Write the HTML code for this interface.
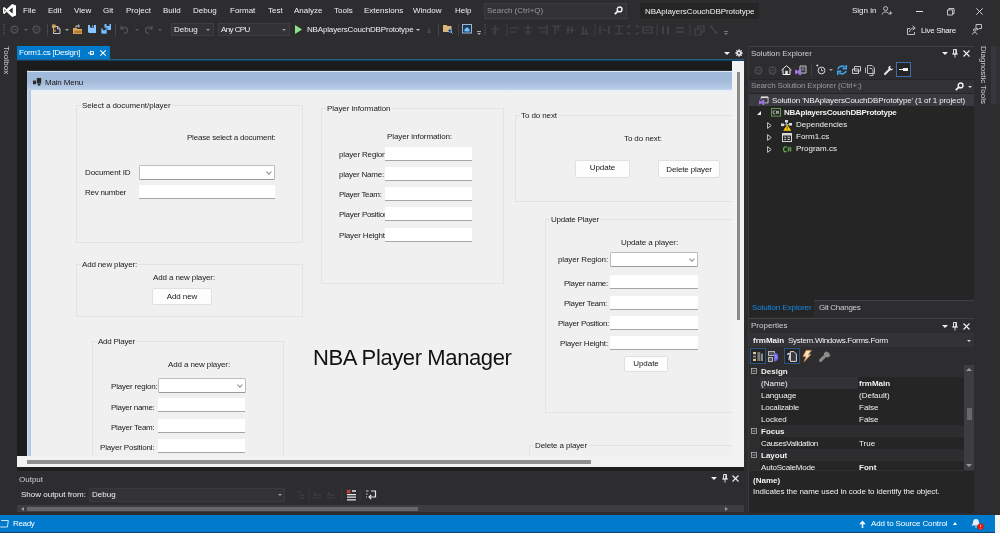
<!DOCTYPE html>
<html><head><meta charset="utf-8"><title>NBAplayersCouchDBPrototype - Microsoft Visual Studio</title>
<style>
*{box-sizing:border-box;margin:0;padding:0}
html,body{width:1000px;height:533px;overflow:hidden;background:#2d2d30}
body{position:relative;font-family:"Liberation Sans",sans-serif;font-size:8px;color:#f1f1f1;line-height:10px}
.a{position:absolute}
.t{position:absolute;white-space:nowrap;line-height:10px;height:10px}
.b{font-weight:700}
.g{color:#999}
svg{position:absolute;overflow:visible}
.t,.grp>span,.btn{will-change:transform}
.f .t{color:#1a1a1a}
.grp{position:absolute;border:1px solid #e3e3e3}
.grp>span{position:absolute;top:-5px;left:4px;background:#f0f0f0;padding:0 1px;white-space:nowrap;color:#1a1a1a;line-height:10px;height:10px}
.tb{position:absolute;background:#fff;border-bottom:1px solid #a6a6a6}
.cb{position:absolute;background:#fff;border:1px solid #bdbdbd;border-bottom-color:#9a9a9a;border-radius:1.5px}
.cb:after{content:"";position:absolute;right:3.5px;top:3.5px;width:2.8px;height:2.8px;border-right:1px solid #888;border-bottom:1px solid #888;transform:rotate(45deg)}
.btn{position:absolute;background:#fdfdfd;border:1px solid #e0e0e0;border-radius:2px;text-align:center;color:#1a1a1a;white-space:nowrap}
</style></head><body>
<div id="top" class="a" style="left:0;top:0;width:1000px;height:46px">
<!-- vs logo -->
<svg style="left:3px;top:4px" width="13" height="13" viewBox="0 0 13 13"><path d="M9.2 0 L13 1.6 V11.4 L9.2 13 L3.5 7.8 L1.4 10 L0 9.3 V3.7 L1.4 3 L3.5 5.2 Z M9.7 3.6 L5.9 6.5 L9.7 9.4 Z M1.4 5.1 V7.9 L2.8 6.5 Z" fill="#fff" fill-rule="evenodd"/></svg>
<span class="t" style="left:23px;top:6px">File</span>
<span class="t" style="left:48px;top:6px">Edit</span>
<span class="t" style="left:74px;top:6px">View</span>
<span class="t" style="left:103px;top:6px">Git</span>
<span class="t" style="left:126px;top:6px">Project</span>
<span class="t" style="left:163px;top:6px">Build</span>
<span class="t" style="left:193px;top:6px">Debug</span>
<span class="t" style="left:230px;top:6px">Format</span>
<span class="t" style="left:268px;top:6px">Test</span>
<span class="t" style="left:294px;top:6px">Analyze</span>
<span class="t" style="left:334px;top:6px">Tools</span>
<span class="t" style="left:364px;top:6px">Extensions</span>
<span class="t" style="left:413px;top:6px">Window</span>
<span class="t" style="left:455px;top:6px">Help</span>
<div class="a" style="left:484px;top:3px;width:143px;height:16px;background:#333337;border:1px solid #3c3c41"></div>
<span class="t g" style="left:487px;top:6px">Search (Ctrl+Q)</span>
<svg style="left:614px;top:6px" width="9" height="9" viewBox="0 0 9 9"><circle cx="5.6" cy="3.4" r="2.4" fill="none" stroke="#f1f1f1" stroke-width="1.4"/><path d="M3.8 5.2 L0.8 8.2" stroke="#f1f1f1" stroke-width="1.8"/></svg>
<div class="a" style="left:640px;top:3px;width:119px;height:16px;background:#252526"></div>
<span class="t" style="left:645px;top:7px;letter-spacing:-0.047px;">NBAplayersCouchDBPrototype</span>
<span class="t" style="left:852px;top:6px">Sign in</span>
<svg style="left:882px;top:6px" width="11" height="10" viewBox="0 0 11 10"><circle cx="3.6" cy="2.6" r="2" fill="none" stroke="#d0d0d0" stroke-width=".9"/><path d="M0.3 8.5 C0.3 5.2 6.9 5.2 6.9 8.5" fill="none" stroke="#d0d0d0" stroke-width=".9"/><path d="M8.6 5.4 V8.6 M7 7 H10.2" stroke="#d0d0d0" stroke-width=".9"/></svg>
<div class="a" style="left:916px;top:11px;width:7px;height:1px;background:#e0e0e0"></div>
<svg style="left:946.5px;top:7.5px" width="7.5" height="7.5" viewBox="0 0 8 8"><path d="M.5 2 H6 V7.5 H.5 Z M2 2 V.5 H7.5 V6 H6" fill="none" stroke="#e0e0e0" stroke-width=".9"/></svg>
<svg style="left:976px;top:8px" width="7" height="7" viewBox="0 0 7 7"><path d="M.3 .3 L6.7 6.7 M6.7 .3 L.3 6.7" stroke="#e0e0e0" stroke-width=".9"/></svg>
<!-- toolbar -->
<div class="a" style="left:3px;top:24px;width:2px;height:11px;background:repeating-linear-gradient(#46464a 0 1px,transparent 1px 2px)"></div>
<svg style="left:10px;top:25px" width="9" height="9" viewBox="0 0 9 9"><circle cx="4.5" cy="4.5" r="3.3" fill="none" stroke="#4d4d51" stroke-width="1.7"/><path d="M3.4 4.5 H6" stroke="#4d4d51" stroke-width="1.2"/></svg>
<div class="a" style="left:24px;top:29px;border:2px solid transparent;border-top:2px solid #666;width:0;height:0"></div>
<svg style="left:32px;top:25px" width="9" height="9" viewBox="0 0 9 9"><circle cx="4.5" cy="4.5" r="3.3" fill="none" stroke="#4d4d51" stroke-width="1.7"/><path d="M3 4.5 H5.6" stroke="#4d4d51" stroke-width="1.2"/></svg>
<div class="a" style="left:47px;top:24px;width:1px;height:12px;background:#46464a"></div>
<svg style="left:52px;top:24px" width="9" height="10" viewBox="0 0 9 10"><path d="M1.5 2.5 H5.8 L8 4.7 V9.5 H1.5 Z" fill="#2d2d30" stroke="#d8d8d8" stroke-width=".9"/><path d="M0 .5 H3.6 V3.8 H0 Z" fill="#d9a55b"/><path d="M1 5.5 H4 V8 H1 Z" fill="#c09050" opacity=".7"/><path d="M5.5 2.5 V5 H8" fill="none" stroke="#d8d8d8" stroke-width=".8"/></svg>
<div class="a" style="left:65px;top:29px;border:2px solid transparent;border-top:2px solid #a8a8a8;width:0;height:0"></div>
<svg style="left:73px;top:24px" width="10" height="10" viewBox="0 0 10 10"><path d="M0 4 H3.5 L4.5 5 H9 V10 H0 Z" fill="#e0a95a"/><path d="M1.5 6.5 H9.6 L8 9.2 H.8 Z" fill="#8a5a1a" opacity=".55"/><path d="M3 3.6 V2 H6 M5 .6 L6.6 2 L5 3.4" fill="none" stroke="#d8d8d8" stroke-width=".9"/></svg>
<svg style="left:88px;top:25px" width="8" height="8" viewBox="0 0 8 8"><path d="M0 0 H8 V8 H1 L0 7 Z" fill="#86c5ff"/><rect x="2" y="0" width="4" height="2.6" fill="#2d2d30"/><rect x="4.2" y=".4" width="1" height="1.8" fill="#86c5ff"/></svg>
<svg style="left:101px;top:24px" width="10" height="10" viewBox="0 0 10 10"><path d="M3.5 0 H10 V6 H4.5 L3.5 5 Z" fill="#75beff"/><rect x="5.5" y="0" width="3" height="2" fill="#2d2d30"/><path d="M0 4 H6 V10 H1 L0 9 Z" fill="#75beff" stroke="#2d2d30" stroke-width=".6"/><rect x="1.7" y="4" width="3" height="2.2" fill="#2d2d30"/></svg>
<div class="a" style="left:115px;top:24px;width:1px;height:12px;background:#46464a"></div>
<svg style="left:120px;top:25px" width="9" height="9" viewBox="0 0 9 9"><path d="M1 0.5 V4 H4.5 M1.3 3.8 C3 1 7.5 1.5 7.5 5 C7.5 7 6 8.3 4 8.5" fill="none" stroke="#55555a" stroke-width="1.2"/></svg>
<div class="a" style="left:135px;top:29px;border:2px solid transparent;border-top:2px solid #5a5a5e;width:0;height:0"></div>
<svg style="left:144px;top:25px" width="9" height="9" viewBox="0 0 9 9"><path d="M8 0.5 V4 H4.5 M7.7 3.8 C6 1 1.5 1.5 1.5 5 C1.5 7 3 8.3 5 8.5" fill="none" stroke="#55555a" stroke-width="1.2"/></svg>
<div class="a" style="left:158px;top:29px;border:2px solid transparent;border-top:2px solid #5a5a5e;width:0;height:0"></div>
<div class="a" style="left:171px;top:23px;width:43px;height:13px;background:#333337;border:1px solid #3d3d42"></div>
<span class="t" style="left:174px;top:25px">Debug</span>
<div class="a" style="left:206px;top:29px;border:2px solid transparent;border-top:2px solid #999;width:0;height:0"></div>
<div class="a" style="left:218px;top:23px;width:72px;height:13px;background:#333337;border:1px solid #3d3d42"></div>
<span class="t" style="left:221px;top:25px;letter-spacing:-0.587px;">Any CPU</span>
<div class="a" style="left:282px;top:29px;border:2px solid transparent;border-top:2px solid #999;width:0;height:0"></div>
<svg style="left:295px;top:25px" width="7" height="9" viewBox="0 0 7 9"><path d="M0 0 L7 4.5 L0 9 Z" fill="#8ae28a"/></svg>
<span class="t" style="left:307px;top:25px;letter-spacing:-0.162px;">NBAplayersCouchDBPrototype</span>
<div class="a" style="left:416px;top:29px;border:2px solid transparent;border-top:2px solid #c8c8c8;width:0;height:0"></div>
<svg style="left:426px;top:26px" width="6" height="8" viewBox="0 0 6 8"><path d="M1 7 L3 1 L5 7 Z" fill="#46464a"/></svg>
<div class="a" style="left:438px;top:24px;width:1px;height:12px;background:#46464a"></div>
<svg style="left:443px;top:24px" width="10" height="10" viewBox="0 0 10 10"><path d="M0 1 H3.5 L4.5 2 H8.5 V8 H0 Z" fill="#dcb67a"/><circle cx="6.8" cy="6.6" r="1.6" fill="#2d2d30" stroke="#75beff" stroke-width=".9"/><path d="M8 8 L9.5 9.5" stroke="#75beff" stroke-width="1"/></svg>
<div class="a" style="left:458px;top:24px;width:1px;height:12px;background:#3f3f46"></div>
<svg style="left:462px;top:24px" width="10" height="10" viewBox="0 0 10 10"><rect x=".5" y=".5" width="9" height="8.5" fill="#1e3a5a" stroke="#9ab7d8" stroke-width="1"/><path d="M2.5 5.5 L5 3 L7.5 5.5 V7.5 H2.5 Z" fill="#75beff"/></svg>
<div class="a" style="left:477px;top:31px;width:4px;height:1px;background:#aaa"></div>
<div class="a" style="left:477px;top:33px;border:2px solid transparent;border-top:2px solid #aaa;width:0;height:0"></div>
<div class="a" style="left:484px;top:24px;width:2px;height:11px;background:repeating-linear-gradient(#46464a 0 1px,transparent 1px 2px)"></div>
<svg style="left:490px;top:24px" width="240" height="12" viewBox="0 0 240 12" fill="none" stroke="#47474b" stroke-width="1.2">
<path d="M5 1 V11 M1 5 H9 M2 8 H7"/>
<path d="M17 0 V12" stroke-width="1" stroke="#3f3f46"/>
<path d="M20 4 H29 M20 8 H26"/>
<path d="M34 4 H42 M35 8 H41 M38 1 V11"/>
<path d="M48 4 H56 M51 8 H56 M57 1 V11"/>
<path d="M62 2 H71 M65 2 V10 M68 2 V7"/>
<path d="M76 6 H84 M78 2 V10 M82 3 V9"/>
<path d="M90 10 H99 M93 10 V2 M96 10 V5"/>
<path d="M105 0 V12" stroke-width="1" stroke="#3f3f46"/>
<path d="M110 2 V10 M119 2 V10 M112 6 H117"/>
<path d="M125 2 H133 M125 10 H133 M129 2 V10"/>
<path d="M138 2 H141 M145 2 H148 M138 10 H141 M145 10 H148 M138 2 V4 M148 2 V4 M138 8 V10 M148 8 V10"/>
<path d="M153 3 H162 V9 H153 Z M155 6 H160"/>
<path d="M167 0 V12" stroke-width="1" stroke="#3f3f46"/>
<path d="M173 2 V10 M178 2 V10" stroke-width="1.6"/>
<path d="M186 4 H194 M186 8 H194" stroke-width="1.6"/>
<path d="M200 0 V12" stroke-width="1" stroke="#3f3f46"/>
<path d="M205 5 H211 V11 H205 Z M208 5 V2 H214 V8 H211"/>
<path d="M220 2 L227 9 M220 2 H223 M227 9 H224"/>
</svg>
<div class="a" style="left:724px;top:31px;width:4px;height:1px;background:#777"></div>
<div class="a" style="left:724px;top:33px;border:2px solid transparent;border-top:2px solid #777;width:0;height:0"></div>
<!-- live share -->
<svg style="left:907px;top:25px" width="10" height="10" viewBox="0 0 10 10" fill="none" stroke="#d0d0d0" stroke-width=".9"><path d="M3 3.5 H.5 V9.5 H7.5 V7"/><path d="M2.5 7 C3 4 5 3 7 3 M5.5 .8 L8.2 3 L5.5 5.2"/></svg>
<span class="t" style="left:921px;top:26px;letter-spacing:-0.345px;">Live Share</span>
<svg style="left:972px;top:24px" width="10" height="11" viewBox="0 0 10 11" fill="none" stroke="#d0d0d0" stroke-width=".9"><path d="M4 .5 H9.5 V4.5 H7 L5.5 6 V4.5 H4 Z"/><circle cx="2.8" cy="6" r="1.3"/><path d="M.5 10.5 C.5 7.8 5 7.8 5 10.5"/></svg>
<!-- TAB ROW -->
<span class="t" style="left:-9px;top:56px;transform:rotate(90deg);transform-origin:center;width:30px;color:#d0d0d0;letter-spacing:0.132px;">Toolbox</span>
<div class="a" style="left:17px;top:46px;width:93px;height:14px;background:#007acc"></div>
<span class="t" style="left:19px;top:48px;color:#fff;letter-spacing:-0.230px;">Form1.cs [Design]</span>
<svg style="left:88px;top:50px" width="6" height="6" viewBox="0 0 6 6"><path d="M0 3 H2.5 M2.5 .8 V5.2 M2.5 1.5 H5.5 V4 H2.5 M2.5 4.5 H5.5" fill="none" stroke="#fff" stroke-width=".9"/></svg>
<svg style="left:100px;top:50px" width="6" height="6" viewBox="0 0 6 6"><path d="M.3 .3 L5.7 5.7 M5.7 .3 L.3 5.7" stroke="#fff" stroke-width="1.1"/></svg>
<div class="a" style="left:17px;top:59px;width:727px;height:2px;background:linear-gradient(#2a5f8a 50%,#103f63 50%)"></div>
<div class="a" style="left:724px;top:52px;border:3px solid transparent;border-top:3px solid #f1f1f1;width:0;height:0"></div>
<svg style="left:735px;top:49px" width="8" height="8" viewBox="0 0 8 8"><circle cx="4" cy="4" r="2.1" fill="none" stroke="#f1f1f1" stroke-width="1.5"/><path d="M4 0 V8 M0 4 H8 M1.2 1.2 L6.8 6.8 M6.8 1.2 L1.2 6.8" stroke="#f1f1f1" stroke-width=".9"/><circle cx="4" cy="4" r="1" fill="#2d2d30"/></svg>
<div class="a" style="left:991px;top:46px;width:9px;height:58px;background:linear-gradient(90deg,#37373b 55%,#323236 55%)"></div>
<span class="t" style="left:953px;top:71px;transform:rotate(90deg);transform-origin:center;width:60px;color:#d0d0d0;letter-spacing:-0.007px;">Diagnostic Tools</span>
</div>
<div id="designer" class="a" style="left:17px;top:61px;width:727px;height:406px;overflow:hidden">
<div class="a" style="left:0;top:0;width:727px;height:406px;background:#1c1c1c"></div><!--id-bg-->
<!-- coordinates inside designer: origin (17,61) -->
<div class="a" style="left:715px;top:0;width:12px;height:406px;background:#f2f2f2"></div>
<div class="a" style="left:0;top:395px;width:727px;height:11px;background:#f2f2f2"></div>
<div class="a" style="left:720px;top:11px;width:3px;height:248px;background:#8a8a8a"></div>
<div class="a" style="left:10px;top:399px;width:564px;height:4px;background:#8f8f8f"></div>
<!-- form -->
<div class="a f" style="left:10px;top:9px;width:705px;height:386px;background:#f0f0f0;overflow:hidden;border-radius:2px 0 0 0">
 <div class="a" style="left:0;top:0;width:705px;height:22px;background:linear-gradient(#2a2f36 0,#2a2f36 .6px,#dfe9f3 1px,#dfe9f3 1.8px,#9fbadc 2.4px,#a2b9d9 10px,#a9c0df 14px,#b9cee8 19.4px,#e6eef7 20px,#e8eff7 21.2px,#f0f0f0 22px)"></div>
 <div class="a" style="left:0;top:20px;width:4px;height:400px;z-index:1;background:linear-gradient(90deg,#d5e3f3,#b4c9e6 50%)"></div>
 <svg style="left:6px;top:8px" width="9" height="8" viewBox="0 0 9 8"><rect x="0" y="2.6" width="3" height="3.6" fill="#2a2a2a"/><rect x="3.8" y="0" width="4.4" height="5.6" fill="#2a2a2a"/><rect x="4.8" y="6" width="2.6" height="1.6" fill="#2a2a2a"/></svg>
 <span class="t" style="left:18px;top:8px;letter-spacing:-0.175px;">Main Menu</span>
<div class="grp" style="left:49px;top:35px;width:227px;height:138px"><span style="letter-spacing:-0.074px;">Select a document/player</span></div>
<div class="grp" style="left:294px;top:38px;width:183px;height:176px"><span style="letter-spacing:-0.055px;">Player information</span></div>
<div class="grp" style="left:488px;top:45px;width:246px;height:87px"><span style="letter-spacing:-0.092px;">To do next</span></div>
<div class="grp" style="left:518px;top:149px;width:216px;height:194px"><span style="letter-spacing:-0.208px;">Update Player</span></div>
<div class="grp" style="left:49px;top:194px;width:227px;height:53px"><span style="letter-spacing:-0.158px;">Add new player:</span></div>
<div class="grp" style="left:65px;top:271px;width:192px;height:130px"><span style="letter-spacing:-0.214px;">Add Player</span></div>
<div class="grp" style="left:502px;top:375px;width:232px;height:26px"><span style="letter-spacing:-0.121px;">Delete a player</span></div>
<span class="t" style="left:160px;top:63px;letter-spacing:-0.214px;">Please select a document:</span>
<span class="t" style="left:58px;top:98px;letter-spacing:-0.108px;">Document ID</span>
<div class="cb" style="left:112px;top:95px;width:136px;height:15px"></div>
<span class="t" style="left:58px;top:118px;letter-spacing:-0.258px;">Rev number</span>
<div class="tb" style="left:112px;top:115px;width:136px;height:14px"></div>
<span class="t" style="left:360px;top:62px;letter-spacing:-0.090px;">Player information:</span>
<span class="t" style="left:312px;top:80px;letter-spacing:-0.150px;width:46px;overflow:hidden">player Region:</span>
<div class="tb" style="left:358px;top:77px;width:87px;height:14px"></div>
<span class="t" style="left:312px;top:100px;letter-spacing:-0.215px;width:46px;overflow:hidden">player Name:</span>
<div class="tb" style="left:358px;top:97px;width:87px;height:14px"></div>
<span class="t" style="left:312px;top:120px;letter-spacing:-0.329px;width:46px;overflow:hidden">Player Team:</span>
<div class="tb" style="left:358px;top:117px;width:87px;height:14px"></div>
<span class="t" style="left:312px;top:140px;letter-spacing:-0.287px;width:46px;overflow:hidden">Player Position:</span>
<div class="tb" style="left:358px;top:137px;width:87px;height:14px"></div>
<span class="t" style="left:312px;top:161px;letter-spacing:-0.161px;width:46px;overflow:hidden">Player Height:</span>
<div class="tb" style="left:358px;top:158px;width:87px;height:14px"></div>
<span class="t" style="left:597px;top:64px;letter-spacing:-0.104px;">To do next:</span>
<div class="btn" style="left:548px;top:90px;width:55px;height:18px;line-height:16px"><span style="position:relative;top:-1px;letter-spacing:-0.049px;">Update</span></div>
<div class="btn" style="left:631px;top:90px;width:62px;height:18px;line-height:16px"><span style="position:relative;top:1px;letter-spacing:-0.126px;">Delete player</span></div>
<span class="t" style="left:594px;top:168px;letter-spacing:-0.106px;">Update a player:</span>
<span class="t" style="left:531px;top:185px;letter-spacing:-0.114px;">player Region:</span>
<div class="cb" style="left:583px;top:182px;width:88px;height:15px"></div>
<span class="t" style="left:537px;top:209px;letter-spacing:-0.262px;">Player name:</span>
<div class="tb" style="left:583px;top:205px;width:88px;height:14px"></div>
<span class="t" style="left:537px;top:229px;letter-spacing:-0.296px;">Player Team:</span>
<div class="tb" style="left:583px;top:226px;width:88px;height:14px"></div>
<span class="t" style="left:531px;top:249px;letter-spacing:-0.287px;">Player Position:</span>
<div class="tb" style="left:583px;top:246px;width:88px;height:14px"></div>
<span class="t" style="left:533px;top:269px;letter-spacing:-0.161px;">Player Height:</span>
<div class="tb" style="left:583px;top:266px;width:88px;height:14px"></div>
<div class="btn" style="left:597px;top:286px;width:44px;height:16px;line-height:14px"><span style="position:relative;top:0px;letter-spacing:-0.049px;">Update</span></div>
<span class="t" style="left:126px;top:203px;letter-spacing:-0.120px;">Add a new player:</span>
<div class="btn" style="left:125px;top:218px;width:60px;height:17px;line-height:15px"><span style="position:relative;top:0px;letter-spacing:-0.092px;">Add new</span></div>
<span class="t" style="left:141px;top:290px;letter-spacing:-0.120px;">Add a new player:</span>
<span class="t" style="left:84px;top:312px;letter-spacing:-0.204px;">Player region:</span>
<div class="cb" style="left:131px;top:308px;width:88px;height:15px"></div>
<span class="t" style="left:84px;top:333px;letter-spacing:-0.303px;">Player name:</span>
<div class="tb" style="left:131px;top:328px;width:87px;height:14px"></div>
<span class="t" style="left:84px;top:353px;letter-spacing:-0.254px;">Player Team:</span>
<div class="tb" style="left:131px;top:349px;width:87px;height:14px"></div>
<span class="t" style="left:73px;top:373px;letter-spacing:-0.168px;">Player Positionl:</span>
<div class="tb" style="left:131px;top:369px;width:87px;height:14px"></div>
<span class="t" style="left:286px;top:275px;font-size:22px;line-height:26px;height:26px;color:#111;letter-spacing:-0.385px;">NBA Player Manager</span>
</div>
</div>
<div id="output" class="a" style="left:17px;top:467px;width:727px;height:48px">
<!-- origin (17,467) size 727x48 -->
<div class="a" style="left:0;top:0;width:727px;height:4px;background:#1e1e1e"></div>
<div class="a" style="left:0;top:4px;width:727px;height:44px;background:#2d2d30"></div>
<span class="t" style="left:2px;top:8px;color:#d0d0d0">Output</span>
<div class="a" style="left:694px;top:10px;border:3px solid transparent;border-top:3px solid #f1f1f1;width:0;height:0"></div>
<svg style="left:705px;top:7px" width="6" height="9" viewBox="0 0 6 9"><path d="M1.5 .5 H4.5 V5 H1.5 Z M0 5 H6 M3 5 V8.5 M3.8 .5 V5" fill="none" stroke="#f1f1f1" stroke-width=".9"/></svg>
<svg style="left:715px;top:8px" width="7" height="7" viewBox="0 0 7 7"><path d="M.5 .5 L6.5 6.5 M6.5 .5 L.5 6.5" stroke="#f1f1f1" stroke-width="1.1"/></svg>
<span class="t" style="left:4px;top:23px">Show output from:</span>
<div class="a" style="left:72px;top:21px;width:196px;height:14px;background:#333337;border:1px solid #3a3a3e"></div>
<span class="t" style="left:75px;top:23px">Debug</span>
<div class="a" style="left:261px;top:27px;border:2px solid transparent;border-top:2px solid #999;width:0;height:0"></div>
<svg style="left:279px;top:22px" width="100" height="12" viewBox="0 0 100 12" fill="none">
<path d="M1 3 H5 M3 6 H8 M3 9 H8" stroke="#424246" stroke-width="1.2"/>
<path d="M13 0 V12" stroke="#3a3a3f" stroke-width="1"/>
<path d="M19 3 V5 M17 6 H25 M17 9 H25" stroke="#424246" stroke-width="1.2"/>
<path d="M33 3 V5 M31 6 H39 M31 9 H39" stroke="#424246" stroke-width="1.2"/>
<path d="M46 0 V12" stroke="#3a3a3f" stroke-width="1"/>
<path d="M51 .8 L54.4 4.2 M54.4 .8 L51 4.2" stroke="#e8493a" stroke-width="1.2"/>
<path d="M56 2 H60 M51 5.6 H60 M51 8.2 H60 M51 10.8 H60" stroke="#e8e8e8" stroke-width="1.3"/>
<path d="M64 0 V12" stroke="#3a3a3f" stroke-width="1"/>
<path d="M75 2 H79.5 V8 H73 M75.2 5.8 L73 8 L75.2 10.2" stroke="#e8e8e8" stroke-width="1.2"/>
<path d="M70 2 H72.5 M70 5 H71.5 M70 8 H71" stroke="#e8e8e8" stroke-width=".9"/>
</svg>
<div class="a" style="left:0;top:38px;width:727px;height:7px;background:#3e3e42"></div>
<div class="a" style="left:4px;top:39.5px;border:2.5px solid transparent;border-right:3px solid #999;border-left:0;width:0;height:0"></div>
<div class="a" style="left:708px;top:39.5px;border:2.5px solid transparent;border-left:3px solid #999;border-right:0;width:0;height:0"></div>
<div class="a" style="left:10px;top:40px;width:391px;height:4px;background:linear-gradient(#686868 85%,#55555a)"></div>
</div>
<div id="right" class="a" style="left:748px;top:46px;width:226px;height:467px">
<!-- origin (748,46); size 225x467 -->
<div class="a" style="left:0;top:0;width:226px;height:467px;background:#252526"></div><!--id-bg-->
<div class="a" style="left:0;top:0;width:226px;height:33px;background:#2d2d30"></div>
<div class="a" style="left:0;top:0;width:226px;height:1px;background:#3f3f46"></div>
<span class="t" style="left:3px;top:3px;color:#d0d0d0">Solution Explorer</span>
<div class="a" style="left:194px;top:6px;border:3px solid transparent;border-top:3px solid #f1f1f1;width:0;height:0"></div>
<svg style="left:204px;top:3px" width="6" height="9" viewBox="0 0 6 9"><path d="M1.5 .5 H4.5 V5 H1.5 Z M0 5 H6 M3 5 V8.5 M3.8 .5 V5" fill="none" stroke="#f1f1f1" stroke-width=".9"/></svg>
<svg style="left:215px;top:4px" width="7" height="7" viewBox="0 0 7 7"><path d="M.5 .5 L6.5 6.5 M6.5 .5 L.5 6.5" stroke="#f1f1f1" stroke-width="1.1"/></svg>
<!-- toolbar icons y center 24 -->
<svg style="left:6px;top:20px" width="9" height="9" viewBox="0 0 9 9"><circle cx="4.5" cy="4.5" r="3.3" fill="none" stroke="#48484c" stroke-width="1.7"/><path d="M3 4.5 H6.5" stroke="#4a4a4e" stroke-width="1.2"/></svg>
<svg style="left:20px;top:20px" width="9" height="9" viewBox="0 0 9 9"><circle cx="4.5" cy="4.5" r="3.3" fill="none" stroke="#48484c" stroke-width="1.7"/><path d="M2.5 4.5 H6" stroke="#4a4a4e" stroke-width="1.2"/></svg>
<svg style="left:33px;top:19px" width="11" height="10" viewBox="0 0 11 10"><path d="M.5 5.2 L5.5 .7 L10.5 5.2 M2 4.5 V9.5 H9 V4.5" fill="none" stroke="#f1f1f1" stroke-width="1"/><rect x="4.3" y="5.8" width="2.4" height="3.7" fill="#f1f1f1"/></svg>
<svg style="left:47px;top:19px" width="12" height="11" viewBox="0 0 12 11"><path d="M5 1 H11 V8 H5 Z" fill="none" stroke="#c8c8c8" stroke-width="1"/><path d="M6.5 3 H9.5 M6.5 5 H9.5" stroke="#c8c8c8" stroke-width=".8"/><path d="M0 5.2 L1 4.6 L2.6 6 L5 3.6 L6.3 4.2 V9.8 L5 10.4 L2.6 8 L1 9.4 L0 8.8 Z" fill="#a074e0"/></svg>
<div class="a" style="left:63px;top:18px;width:1px;height:12px;background:#3f3f46"></div>
<svg style="left:68px;top:18px" width="10" height="11" viewBox="0 0 10 11"><circle cx="5.5" cy="6.5" r="3.4" fill="none" stroke="#d8d8d8" stroke-width="1"/><path d="M5.5 4.5 V6.7 H7.2" fill="none" stroke="#d8d8d8" stroke-width=".9"/><circle cx="1.3" cy="1.5" r="1" fill="#d8d8d8"/></svg>
<div class="a" style="left:81px;top:23px;border:2px solid transparent;border-top:2px solid #a0a0a0;width:0;height:0"></div>
<svg style="left:89px;top:19px" width="10" height="10" viewBox="0 0 10 10"><path d="M1 4.2 C1.4 1.6 5 .2 7.6 2.2 M9.2 0 V3.6 H5.6 M9 5.8 C8.6 8.4 5 9.8 2.4 7.8 M.8 10 V6.4 H4.4" fill="none" stroke="#3f9fe8" stroke-width="1.7"/></svg>
<svg style="left:104px;top:20px" width="9" height="9" viewBox="0 0 9 9"><path d="M2.5 .5 H8.5 V5 H2.5 Z M.5 3 H6.5 V7.5 H.5 Z" fill="#2d2d30" stroke="#c8c8c8" stroke-width="1"/></svg>
<svg style="left:117px;top:19px" width="10" height="11" viewBox="0 0 10 11"><path d="M.5 2.5 V8 M2.5 .5 H7 L9.5 3 V8.5 H2.5 Z M4.5 3.5 H7 L8 4.8 V10.5 H4.5" fill="none" stroke="#c8c8c8" stroke-width=".9"/></svg>
<svg style="left:136px;top:19px" width="10" height="10" viewBox="0 0 10 10"><path d="M1 9 L5.2 4.8" stroke="#e8e8e8" stroke-width="2" stroke-linecap="round"/><path d="M6.5 .7 C4.5 .7 3.8 2.8 4.8 4.4 C6 5.8 8.6 5.6 9.2 3.4 L7.4 4 L6.2 2.8 Z" fill="#e8e8e8"/></svg>
<div class="a" style="left:148px;top:16px;width:15px;height:15px;border:1px solid #3e6fa8;background:#252526"></div>
<div class="a" style="left:151px;top:23px;width:4px;height:1px;background:#f1f1f1"></div>
<div class="a" style="left:155px;top:22px;width:5px;height:3px;background:#f1f1f1"></div>
<!-- search row -->
<div class="a" style="left:0;top:34px;width:226px;height:13px;background:#333337"></div>
<span class="t g" style="left:3px;top:35px;letter-spacing:-0.148px;">Search Solution Explorer (Ctrl+;)</span>
<svg style="left:207px;top:36px" width="9" height="9" viewBox="0 0 9 9"><circle cx="5.6" cy="3.4" r="2.4" fill="none" stroke="#f1f1f1" stroke-width="1.4"/><path d="M3.8 5.2 L0.8 8.2" stroke="#f1f1f1" stroke-width="1.8"/></svg>
<div class="a" style="left:220px;top:40px;border:2px solid transparent;border-top:2px solid #d8d8d8;width:0;height:0"></div>
<!-- tree -->
<div class="a" style="left:0;top:48px;width:226px;height:12px;background:#3a3a40"></div>
<svg style="left:10.5px;top:50px" width="9.5" height="9.5" viewBox="0 0 11 11"><path d="M2.5 1 H10.5 V8 H6.5 M2.5 1 V4" fill="none" stroke="#d8d8d8" stroke-width="1"/><path d="M2.5 1.7 H10.5" stroke="#d8d8d8" stroke-width="1.6"/><path d="M0 5.6 L1 5 L2.6 6.4 L5 4 L6.3 4.6 V10.2 L5 10.8 L2.6 8.4 L1 9.8 L0 9.2 Z" fill="#a074e0"/></svg>
<span class="t" style="left:24px;top:50px;letter-spacing:-0.106px;">Solution 'NBAplayersCouchDBPrototype' (1 of 1 project)</span>
<div class="a" style="left:9px;top:65px;border:2.5px solid transparent;border-right:2.5px solid #f1f1f1;border-bottom:2.5px solid #f1f1f1;width:0;height:0"></div>
<svg style="left:22.5px;top:62px" width="10" height="9" viewBox="0 0 11 10"><rect x=".5" y=".5" width="10" height="8.5" fill="none" stroke="#6aa84f" stroke-width="1"/><path d="M4.6 3.2 C3 2.6 2.2 3.6 2.2 4.8 C2.2 6 3 7 4.6 6.4" fill="none" stroke="#e8e8e8" stroke-width=".9"/><path d="M6.2 3 V6.6 M8 3 V6.6 M5.4 4.1 H8.8 M5.4 5.5 H8.8" stroke="#e8e8e8" stroke-width=".6"/></svg>
<span class="t b" style="left:36px;top:62px;letter-spacing:-0.255px;">NBAplayersCouchDBPrototype</span>
<svg style="left:19px;top:76px" width="5" height="7" viewBox="0 0 5 7"><path d="M.6 .6 L4.2 3.5 L.6 6.4 Z" fill="none" stroke="#d8d8d8" stroke-width=".9"/></svg>
<svg style="left:33px;top:74px" width="11" height="11" viewBox="0 0 11 11"><rect x="4" y="0" width="3" height="2.6" fill="#d8d8d8"/><rect x="0" y="3.5" width="3" height="2.6" fill="#d8d8d8"/><rect x="8" y="3" width="3" height="2.6" fill="#d8d8d8"/><path d="M3 4.8 H5.5 V2.6 M5.5 4.4 H8" fill="none" stroke="#d8d8d8" stroke-width=".7"/><path d="M6.2 4.6 L10.2 10.8 H2.2 Z" fill="#ffcc00"/><path d="M6.2 6.6 V8.6 M6.2 9.3 V10" stroke="#222" stroke-width=".8"/></svg>
<span class="t" style="left:48px;top:74px">Dependencies</span>
<svg style="left:19px;top:88px" width="5" height="7" viewBox="0 0 5 7"><path d="M.6 .6 L4.2 3.5 L.6 6.4 Z" fill="none" stroke="#d8d8d8" stroke-width=".9"/></svg>
<svg style="left:34px;top:87px" width="10" height="9" viewBox="0 0 10 9"><rect x=".5" y=".5" width="9" height="8" fill="none" stroke="#d8d8d8" stroke-width="1"/><path d="M.5 1.6 H9.5" stroke="#d8d8d8" stroke-width="1.8"/><path d="M2.2 4.2 H4.2 M5.4 4.2 H8 M2.2 6.4 H4.2 M5.4 6.4 H8" stroke="#d8d8d8" stroke-width="1"/></svg>
<span class="t" style="left:48px;top:86px">Form1.cs</span>
<svg style="left:19px;top:100px" width="5" height="7" viewBox="0 0 5 7"><path d="M.6 .6 L4.2 3.5 L.6 6.4 Z" fill="none" stroke="#d8d8d8" stroke-width=".9"/></svg>
<svg style="left:35px;top:100px" width="9" height="7" viewBox="0 0 9 7"><path d="M3.6 1 C1.6 .2 .6 1.6 .6 3.3 C.6 5 1.6 6.4 3.6 5.6" fill="none" stroke="#6cc04a" stroke-width="1.1"/><path d="M5.4 .8 V5.6 M7.4 .8 V5.6 M4.4 2.2 H8.6 M4.4 4.2 H8.6" stroke="#6cc04a" stroke-width=".7"/></svg>
<span class="t" style="left:48px;top:98px">Program.cs</span>
<!-- bottom tabs of SE -->
<div class="a" style="left:0;top:254px;width:226px;height:19px;background:#2d2d30;border-top:1px solid #3f3f46"></div>
<div class="a" style="left:0;top:254px;width:66px;height:17px;background:#252526"></div>
<span class="t" style="left:4px;top:257px;color:#0f8ae6;letter-spacing:-0.084px;">Solution Explorer</span>
<span class="t" style="left:71px;top:257px;color:#d0d0d0;letter-spacing:-0.270px;">Git Changes</span>
<!-- PROPERTIES header -->
<div class="a" style="left:0;top:272px;width:226px;height:47px;background:#2d2d30;border-top:1px solid #3f3f46"></div>
<span class="t" style="left:3px;top:275px;color:#d0d0d0">Properties</span>
<div class="a" style="left:194px;top:279px;border:3px solid transparent;border-top:3px solid #f1f1f1;width:0;height:0"></div>
<svg style="left:204px;top:276px" width="6" height="9" viewBox="0 0 6 9"><path d="M1.5 .5 H4.5 V5 H1.5 Z M0 5 H6 M3 5 V8.5 M3.8 .5 V5" fill="none" stroke="#f1f1f1" stroke-width=".9"/></svg>
<svg style="left:215px;top:277px" width="7" height="7" viewBox="0 0 7 7"><path d="M.5 .5 L6.5 6.5 M6.5 .5 L.5 6.5" stroke="#f1f1f1" stroke-width="1.1"/></svg>
<div class="a" style="left:1px;top:287px;width:225px;height:14px;background:#333337"></div>
<span class="t b" style="left:5px;top:290px">frmMain</span>
<span class="t" style="left:40px;top:290px;letter-spacing:-0.285px;">System.Windows.Forms.Form</span>
<div class="a" style="left:219px;top:294px;border:2px solid transparent;border-top:2px solid #d8d8d8;width:0;height:0"></div>
<div class="a" style="left:2px;top:302px;width:16px;height:16px;border:1px solid #2a5582;background:#252526"></div>
<svg style="left:5px;top:306px" width="10" height="9" viewBox="0 0 10 9"><rect x="0" y="0" width="3" height="2.2" fill="#d0c8a8"/><rect x="0" y="3.6" width="3" height="1.8" fill="#8a8a80"/><rect x="0" y="6.8" width="3" height="2.2" fill="#d0c8a8"/><rect x="4.4" y="0" width="2.8" height="9" fill="#7a7a7a"/><rect x="7.8" y="1.6" width="2.2" height="7.4" fill="#8a8a8a"/></svg>
<svg style="left:20px;top:305px" width="11" height="11" viewBox="0 0 11 11"><rect x=".5" y=".5" width="6" height="4" fill="#555" stroke="#c0c0c0" stroke-width=".9"/><rect x=".5" y="6.5" width="4" height="4" fill="#555" stroke="#c0c0c0" stroke-width=".9"/><path d="M6 2 C9 1.5 11 3.5 9.6 5.6 C11.4 7.4 9.6 10.6 6 10.4 Z" fill="#6f63e6"/><path d="M7 4 L8.6 5.6 L7 7.4" fill="none" stroke="#cfc8ff" stroke-width=".8"/></svg>
<div class="a" style="left:36px;top:302px;width:16px;height:16px;border:1px solid #2a5582;background:#252526"></div>
<svg style="left:39px;top:305px" width="10" height="11" viewBox="0 0 10 11"><path d="M3.4 .6 H7 L9.4 3 V10.4 H3.4 Z" fill="#3a3a3e" stroke="#d8d8d8" stroke-width="1"/><path d="M.6 3.2 C2.2 1.6 4.2 3.2 2.6 5 L2 8.6" fill="none" stroke="#cfd8e8" stroke-width="1.3" stroke-linecap="round"/></svg>
<svg style="left:54px;top:304px" width="10" height="12" viewBox="0 0 10 12"><path d="M4.2 .4 H9.4 L6.4 4.6 H8.8 L2.2 11.6 L4 6.4 H1 Z" fill="#f2e2c8" stroke="#e0893e" stroke-width=".8"/></svg>
<svg style="left:71px;top:305px" width="12" height="11" viewBox="0 0 12 11"><path d="M1.6 9.4 L6 5" stroke="#8c8c8c" stroke-width="3" stroke-linecap="round"/><path d="M8 .4 C5.2 .4 4.2 3.2 5.4 5.2 C7 7 10.6 6.8 11.6 3.8 L9.2 4.6 L7.4 3 Z" fill="#8c8c8c"/><circle cx="8" cy="3.6" r="2.6" fill="#8c8c8c"/><path d="M8.2 .6 L7.2 3.2 L9.4 4.8 L11.6 3.6" fill="none" stroke="#252526" stroke-width="0"/></svg>
<div class="a" style="left:0;top:319px;width:226px;height:105px;background:#2d2d30;overflow:hidden">
<svg style="left:3px;top:3px" width="6" height="6" viewBox="0 0 7 7"><rect x=".5" y=".5" width="6" height="6" fill="none" stroke="#c8c8c8" stroke-width=".8"/><path d="M1.8 3.5 H5.2" stroke="#c8c8c8" stroke-width=".9"/></svg>
<span class="t b" style="left:13px;top:2px">Design</span>
<div class="a" style="left:12px;top:12px;width:204px;height:12px;background:#252526"></div>
<div class="a" style="left:12px;top:12px;width:98px;height:12px;background:#333337"></div>
<span class="t" style="left:13px;top:14px;">(Name)</span>
<span class="t" style="left:111px;top:14px"><b>frmMain</b></span>
<div class="a" style="left:12px;top:24px;width:204px;height:12px;background:#252526"></div>
<span class="t" style="left:13px;top:26px;letter-spacing:-0.012px;">Language</span>
<span class="t" style="left:111px;top:26px">(Default)</span>
<div class="a" style="left:12px;top:36px;width:204px;height:12px;background:#252526"></div>
<span class="t" style="left:13px;top:38px;letter-spacing:-0.185px;">Localizable</span>
<span class="t" style="left:111px;top:38px">False</span>
<div class="a" style="left:12px;top:48px;width:204px;height:12px;background:#252526"></div>
<span class="t" style="left:13px;top:50px;">Locked</span>
<span class="t" style="left:111px;top:50px">False</span>
<svg style="left:3px;top:63px" width="6" height="6" viewBox="0 0 7 7"><rect x=".5" y=".5" width="6" height="6" fill="none" stroke="#c8c8c8" stroke-width=".8"/><path d="M1.8 3.5 H5.2" stroke="#c8c8c8" stroke-width=".9"/></svg>
<span class="t b" style="left:13px;top:62px">Focus</span>
<div class="a" style="left:12px;top:72px;width:204px;height:12px;background:#252526"></div>
<span class="t" style="left:13px;top:74px;letter-spacing:-0.292px;">CausesValidation</span>
<span class="t" style="left:111px;top:74px">True</span>
<svg style="left:3px;top:87px" width="6" height="6" viewBox="0 0 7 7"><rect x=".5" y=".5" width="6" height="6" fill="none" stroke="#c8c8c8" stroke-width=".8"/><path d="M1.8 3.5 H5.2" stroke="#c8c8c8" stroke-width=".9"/></svg>
<span class="t b" style="left:13px;top:86px">Layout</span>
<div class="a" style="left:12px;top:96px;width:204px;height:12px;background:#252526"></div>
<span class="t" style="left:13px;top:98px;letter-spacing:-0.191px;">AutoScaleMode</span>
<span class="t" style="left:111px;top:98px"><b>Font</b></span>
<div class="a" style="left:216px;top:0;width:10px;height:105px;background:#3e3e42"></div>
<div class="a" style="left:218px;top:3px;border:3px solid transparent;border-bottom:3px solid #999;border-top:0;width:0;height:0"></div>
<div class="a" style="left:218px;top:99px;border:3px solid transparent;border-top:3px solid #999;border-bottom:0;width:0;height:0"></div>
<div class="a" style="left:219px;top:43px;width:5px;height:12px;background:#686868"></div>
</div>
<div class="a" style="left:0;top:424px;width:226px;height:43px;background:#252526;border-top:1px solid #2f2f33"></div>
<span class="t b" style="left:5px;top:430px">(Name)</span>
<span class="t" style="left:5px;top:441px;letter-spacing:-0.078px;">Indicates the name used in code to identify the object.</span>
<div class="a" style="left:0;top:0;width:1px;height:467px;background:#38383c"></div>
</div>
<div id="status" class="a" style="left:0;top:515px;width:1000px;height:18px">
<div class="a" style="left:0;top:0;width:1000px;height:18px;background:#007acc"></div><!--id-bg-->
<svg style="left:0px;top:5px" width="9" height="8" viewBox="0 0 9 8"><path d="M1.2 .5 H8.3 L7.4 7 H.2" fill="none" stroke="#e8f2fb" stroke-width=".9"/></svg>
<span class="t" style="left:13px;top:4px;color:#fff;letter-spacing:-0.325px;">Ready</span>
<svg style="left:859px;top:5px" width="7" height="8" viewBox="0 0 7 8"><path d="M3.5 8 V3 " fill="none" stroke="#e8f2fb" stroke-width="1.6"/><path d="M.2 4.2 L3.5 .4 L6.8 4.2 Z" fill="#e8f2fb"/></svg>
<span class="t" style="left:871px;top:4px;color:#fff;letter-spacing:-0.106px;">Add to Source Control</span>
<div class="a" style="left:953px;top:7px;border:2.5px solid transparent;border-bottom:3px solid #fff;border-top:0;width:0;height:0"></div>
<svg style="left:970.5px;top:3px" width="14" height="13" viewBox="0 0 14 13"><path d="M5 1 C2.5 1 2 3 2 5 L.6 7.6 H9.4 L8 5 C8 3 7.5 1 5 1 Z M4 8.4 C4 10 6 10 6 8.4" fill="#e2eefa"/><circle cx="9.6" cy="8.6" r="3.2" fill="#e51400"/><path d="M9.6 6.8 V9 M9.6 9.8 V10.6" stroke="#fff" stroke-width=".8"/></svg>
<div class="a" style="left:995px;top:0;width:5px;height:18px;background:#f4f4f4"></div>
<div class="a" style="left:0;top:16.5px;width:995px;height:1.5px;background:#123f70"></div>
</div>
</body></html>
